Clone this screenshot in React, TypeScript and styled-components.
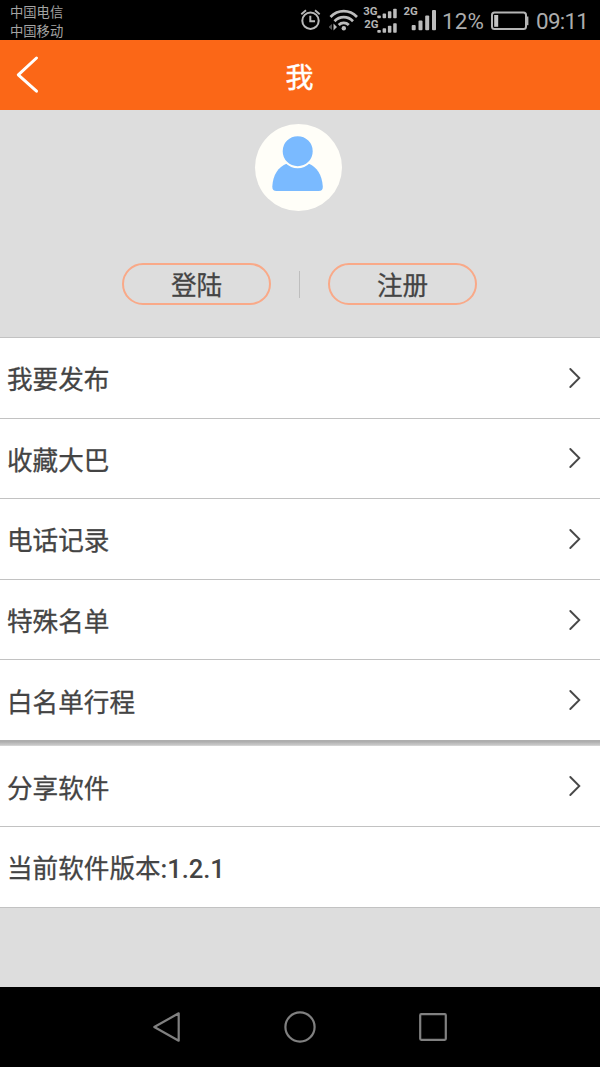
import React from "react";
import styled, { createGlobalStyle } from "styled-components";

const Global = createGlobalStyle`
  * { box-sizing: border-box; }
  html, body { margin: 0; padding: 0; background: #000; }
  body { font-family: Roboto, "Noto Sans CJK SC", sans-serif; }
  svg { display: block; flex: none; }
`;

const Screen = styled.div`
  width: 600px;
  height: 1067px;
  display: flex;
  flex-direction: column;
  overflow: hidden;
  background: #ddd;
`;

const StatusBar = styled.div`
  height: 40px;
  flex: none;
  display: flex;
  justify-content: space-between;
  background: #000;
  color: #a4a4a4;
`;

const Carriers = styled.div`
  padding: 3px 0 0 10px;
  font-size: 13.3px;
  line-height: 19px;
`;

const StatusIcons = styled.div`
  display: flex;
  height: 40px;
`;

const StatusText = styled.span<{ $width: number; $spacing: number }>`
  width: ${(p) => p.$width}px;
  font-size: 22.4px;
  letter-spacing: ${(p) => p.$spacing}px;
  line-height: 42px;
  white-space: nowrap;
  color: #acacac;
`;

const Header = styled.header`
  height: 70px;
  flex: none;
  display: grid;
  grid-template-columns: 60px 1fr 60px;
  align-items: center;
  background: #fb6717;
`;

const Title = styled.h1`
  margin: 0;
  padding: 8px 1px 0 0;
  text-align: center;
  font-size: 28px;
  line-height: 40px;
  font-weight: 400;
  color: #fff;
  -webkit-text-stroke: 0.4px #fff;
`;

const Profile = styled.section`
  height: 227px;
  flex: none;
  display: flex;
  flex-direction: column;
  align-items: center;
  padding-top: 14px;
`;

const Avatar = styled.div`
  width: 87px;
  height: 87px;
  margin-right: 3px;
  border-radius: 50%;
  background: #fffef8;
`;

const AuthRow = styled.div`
  display: flex;
  align-items: center;
  margin: 52px 1px 0 0;
`;

const PillButton = styled.button`
  width: 149px;
  height: 42px;
  padding: 2px 0 0;
  border: 2px solid #f9a988;
  border-radius: 21px;
  background: transparent;
  font: 400 25.6px/38px Roboto, "Noto Sans CJK SC", sans-serif;
  color: #444;
  -webkit-text-stroke: 0.3px #444;
`;

const Divider = styled.div`
  width: 1px;
  height: 27px;
  margin: 0 28px;
  background: #bebebe;
`;

const List = styled.ul<{ $raised?: boolean }>`
  list-style: none;
  margin: 0;
  padding: 0;
  flex: none;
  background: #fff;
  border-bottom: ${(p) => (p.$raised ? "0" : "1px solid #c2c2c2")};
`;

const Gap = styled.div`
  height: 6px;
  flex: none;
  background: linear-gradient(#aeaeae 0, #aeaeae 2px, #bbb 3px, #c8c8c8 5px, #dedede 6px);
`;

const Row = styled.li`
  height: 80.6px;
  display: flex;
  align-items: center;
  justify-content: space-between;
  padding: 5px 18px 0 7px;
  border-top: 1px solid #c2c2c2;
  font-size: 25.6px;
  line-height: 38px;
  color: #444;
  -webkit-text-stroke: 0.3px #444;

  ${Gap} + ${List} > &:first-child {
    height: 80px;
    border-top-color: #fff;
  }
`;

const Version = styled.span`
  font-weight: 500;
  letter-spacing: -0.1px;
  -webkit-text-stroke: 0;
`;

const NavBar = styled.nav`
  height: 80px;
  flex: none;
  margin-top: auto;
  display: flex;
  align-items: center;
  justify-content: space-between;
  padding: 0 151px;
  background: #000;
`;

const AlarmIcon = () => (
  <svg width="29" height="40" viewBox="300 0 29 40" fill="none" stroke="#b9b9b9">
    <circle cx="310.5" cy="20.7" r="8.2" strokeWidth="2" />
    <path d="M310.3 15.8V21.3H315" strokeWidth="2" />
    <path d="M301.3 14.2L306 10.2M315 10.2L319.7 14.2" strokeWidth="1.8" />
  </svg>
);

const WifiIcon = () => (
  <svg width="34" height="40" viewBox="329 0 34 40" fill="none">
    <g stroke="#bcbcbc" strokeWidth="2.7">
      <path d="M330.5 17C338 9.2 349.5 9.2 357 17" />
      <path d="M334.5 21.2C339.7 15.8 347.8 15.8 353 21.2" />
      <path d="M338.7 25C341.5 22.2 346 22.2 348.8 25" />
    </g>
    <circle cx="343.8" cy="28.3" r="2.2" fill="#bcbcbc" />
    <path d="M332 24V30L328.5 27Z" fill="#555" />
    <path d="M333.5 23.5V30.5L337 27Z" fill="#bcbcbc" />
  </svg>
);

const Bars = ({ x, base }: { x: number; base: number }) => (
  <g fill="#bcbcbc">
    {[2.8, 4.6, 7, 9.5].map((h, i) => (
      <rect key={h} x={x + i * 5.3} y={base - h} width="3.5" height={h} rx="0.8" />
    ))}
  </g>
);

const netLabel = {
  fontFamily: "Roboto, sans-serif",
  fontSize: 11.4,
  fontWeight: 700,
  fill: "#b4b4b4",
};

const SignalIcons = () => (
  <svg width="79" height="40" viewBox="363 0 79 40">
    <text x="363.3" y="15.3" {...netLabel}>3G</text>
    <Bars x={377.3} base={18.2} />
    <text x="364.3" y="28.3" {...netLabel}>2G</text>
    <Bars x={377.3} base={32.8} />
    <text x="403.5" y="15.3" {...netLabel}>2G</text>
    <g fill="#bcbcbc">
      <rect x="411.7" y="25" width="4" height="5.3" rx="1" />
      <rect x="418.5" y="20.5" width="4" height="9.8" rx="1" />
      <rect x="425.2" y="15.5" width="4" height="14.8" rx="1" />
      <rect x="432" y="10" width="4" height="20.3" rx="1" />
    </g>
  </svg>
);

const BatteryIcon = () => (
  <svg width="45" height="40" viewBox="491 0 45 40">
    <rect x="492" y="12.6" width="34" height="16.4" rx="2.5" fill="none" stroke="#b5b5b5" strokeWidth="2" />
    <path d="M526.5 16.5h1.9v8.7h-1.9z" fill="#b5b5b5" />
    <rect x="494.2" y="15" width="4" height="11.8" fill="#c4c4c4" />
  </svg>
);

const BackIcon = () => (
  <svg width="60" height="70" viewBox="0 40 60 70" fill="none">
    <path d="M36.5 58L18.3 74.8L36.5 91.2" stroke="#fff" strokeWidth="3" strokeLinecap="round" strokeLinejoin="round" />
  </svg>
);

const PersonIcon = () => (
  <svg width="87" height="87" viewBox="255 124 87 87">
    <path d="M287 163.5C278 167 273 175 272.3 186.5Q272.2 191 276.5 191H318.7Q323 191 322.8 186.5C322 175 317 167 308.5 163.5Z" fill="#7abaff" />
    <circle cx="297.7" cy="151.2" r="16" fill="#7abaff" stroke="#fffef8" strokeWidth="2" />
  </svg>
);

const ChevronSvg = styled.svg`
  margin-top: -5px;
`;

const Chevron = () => (
  <ChevronSvg width="14" height="22" viewBox="0 0 14 22" fill="none">
    <path d="M2.3 2L11.3 11L2.3 20" stroke="#484848" strokeWidth="1.9" strokeLinecap="round" />
  </ChevronSvg>
);

const LinkRow = ({ label }: { label: string }) => (
  <Row>
    <span>{label}</span>
    <Chevron />
  </Row>
);

const mainItems = ["我要发布", "收藏大巴", "电话记录", "特殊名单", "白名单行程"];

export default function App() {
  return (
    <Screen>
      <Global />
      <StatusBar>
        <Carriers>
          <div>中国电信</div>
          <div>中国移动</div>
        </Carriers>
        <StatusIcons>
          <AlarmIcon />
          <WifiIcon />
          <SignalIcons />
          <StatusText $width={49} $spacing={0.2}>12%</StatusText>
          <BatteryIcon />
          <StatusText $width={64} $spacing={-0.7}>09:11</StatusText>
        </StatusIcons>
      </StatusBar>
      <Header>
        <BackIcon />
        <Title>我</Title>
      </Header>
      <Profile>
        <Avatar>
          <PersonIcon />
        </Avatar>
        <AuthRow>
          <PillButton>登陆</PillButton>
          <Divider />
          <PillButton>注册</PillButton>
        </AuthRow>
      </Profile>
      <List $raised>
        {mainItems.map((label) => (
          <LinkRow key={label} label={label} />
        ))}
      </List>
      <Gap />
      <List>
        <LinkRow label="分享软件" />
        <Row>
          <span>
            当前软件版本<Version>:1.2.1</Version>
          </span>
        </Row>
      </List>
      <NavBar>
        <svg width="30" height="34" viewBox="0 0 30 34" fill="none">
          <path d="M27.7 3.3V30.7L3.3 17Z" stroke="#808080" strokeWidth="2.2" strokeLinejoin="round" />
        </svg>
        <svg width="34" height="34" viewBox="0 0 34 34" fill="none">
          <circle cx="17" cy="17" r="14.6" stroke="#808080" strokeWidth="2.2" />
        </svg>
        <svg width="30" height="34" viewBox="0 0 30 34" fill="none">
          <rect x="1.2" y="4.2" width="25.6" height="25.6" rx="1" stroke="#808080" strokeWidth="2.2" />
        </svg>
      </NavBar>
    </Screen>
  );
}
